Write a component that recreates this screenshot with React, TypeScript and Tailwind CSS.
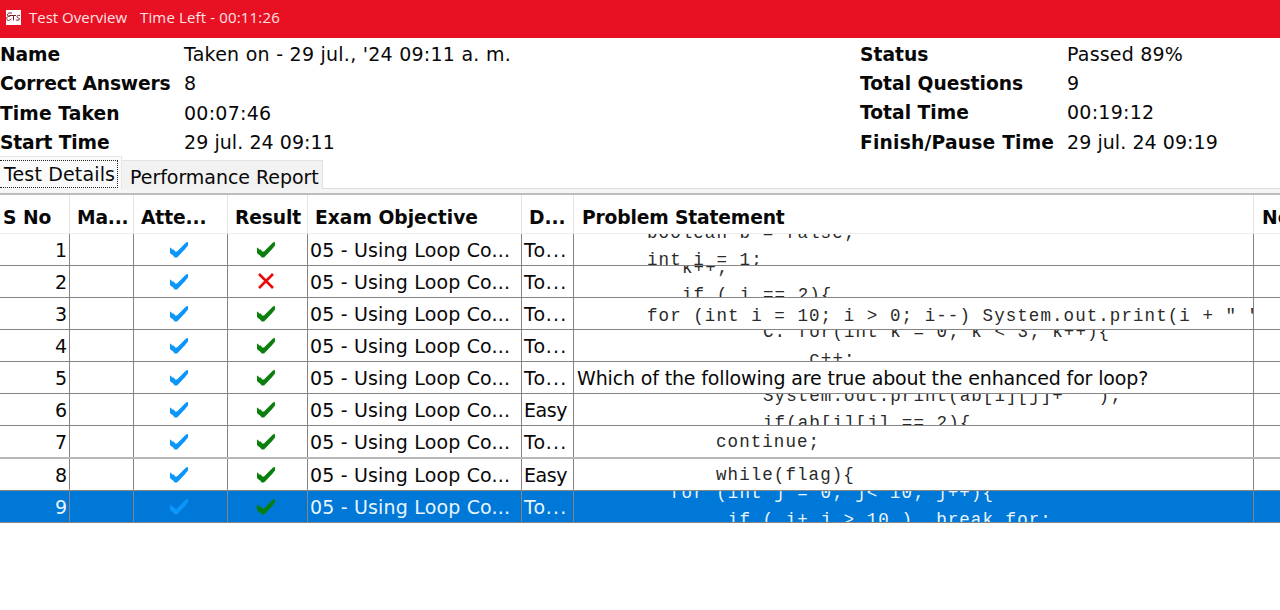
type Row = {
  no: number;
  level: string;
  lines: string[];
  indent: string;
  shift: string;
  passed: boolean;
  prose?: boolean;
};

const two = "-mt-[11px]";
const one = "mt-[5px]";

const rows: Row[] = [
  { no: 1, level: "To...", lines: ["boolean b = false;", "int i = 1;"], indent: "pl-[73px]", shift: "-mt-[14px]", passed: true },
  { no: 2, level: "To...", lines: ["k++;", "if ( i == 2){"], indent: "pl-[108px]", shift: two, passed: false },
  { no: 3, level: "To...", lines: ['for (int i = 10; i > 0; i--) System.out.print(i + " " '], indent: "pl-[73px]", shift: one, passed: true },
  { no: 4, level: "To...", lines: ["C: for(int k = 0; k < 3; k++){", "    c++;"], indent: "pl-[189px]", shift: two, passed: true },
  { no: 5, level: "To...", lines: ["Which of the following are true about the enhanced for loop?"], indent: "pl-[3px]", shift: "mt-[3px]", passed: true, prose: true },
  { no: 6, level: "Easy", lines: ['System.out.print(ab[i][j]+" ");', "if(ab[i][j] == 2){"], indent: "pl-[189px]", shift: two, passed: true },
  { no: 7, level: "To...", lines: ["continue;"], indent: "pl-[142px]", shift: "mt-[3px]", passed: true },
  { no: 8, level: "Easy", lines: ["while(flag){"], indent: "pl-[142px]", shift: "mt-[3px]", passed: true },
  { no: 9, level: "To...", lines: ["for (int j = 0; j< 10; j++){", "     if ( i+ j > 10 )  break for;"], indent: "pl-[96px]", shift: two, passed: true },
];

const leftInfo = [
  ["Name", "Taken on - 29 jul., '24 09:11 a. m.", "tracking-[-0.1px]", "tracking-[0.25px]"],
  ["Correct Answers", "8", "tracking-[-0.2px]", ""],
  ["Time Taken", "00:07:46", "tracking-[0.1px]", "tracking-[0.25px]"],
  ["Start Time", "29 jul. 24 09:11", "tracking-[-0.15px]", "tracking-[0.06px]"],
];

const rightInfo = [
  ["Status", "Passed 89%", "", "tracking-[0.2px]"],
  ["Total Questions", "9", "", ""],
  ["Total Time", "00:19:12", "", "tracking-[0.25px]"],
  ["Finish/Pause Time", "29 jul. 24 09:19", "tracking-[0.2px]", "tracking-[0.06px]"],
];

const grid = "grid grid-cols-[70px_64px_94px_80px_214px_52px_680px_26px]";

function Check({ color }: { color: string }) {
  return (
    <svg width="18" height="16" viewBox="0 0 18 16" className={color} fill="currentColor">
      <path d="M0 5.8L1 5.8L2 7.6H4L5 9.6H7L8.5 8L10 6.5L11.5 5L13 3.5L14.5 2L16 .6L18 0V3.6L16.5 5.2L15 7.2L13.5 8.7L12 10.3L10.5 11.9L9 13.4L7 15.4H4.6L3.4 13.8L1.6 12.4L0 11Z" />
    </svg>
  );
}

function Cross() {
  return (
    <svg width="16" height="16" viewBox="0 0 16 16" className="text-[#ea0a0a]" stroke="currentColor" strokeWidth="2.6">
      <path d="M1 1L15 15M15 1L1 15" />
    </svg>
  );
}

function Info({ items, labelWidth }: { items: string[][]; labelWidth: string }) {
  return (
    <div className="flex flex-col">
      {items.map(([label, value, labelSpacing, valueSpacing]) => (
        <div key={label} className="flex h-[29.5px] items-center whitespace-nowrap">
          <div className={`${labelWidth} shrink-0 text-[18.7px] font-bold ${labelSpacing}`}>{label}</div>
          <div className={valueSpacing}>{value}</div>
        </div>
      ))}
    </div>
  );
}

export default function App() {
  const head = "flex h-full items-center overflow-hidden border-r border-[#e4e4e4] pt-[7px] whitespace-nowrap";
  return (
    <div className="h-[610px] w-[1280px] overflow-hidden bg-white font-['DejaVu_Sans',sans-serif] text-[19px] leading-[27px] text-[#080808]">
      <header className="flex h-[37.5px] items-center bg-[#e81123] pl-[6px] font-['Open_Sans',sans-serif] text-[15px] text-[#ffe3e5]">
        <svg width="15" height="15" viewBox="0 0 15 15" className="-mt-[3px] mr-[8px] shrink-0">
          <rect width="15" height="15" fill="#fff" />
          <g fill="none" stroke="#7c1d24" strokeWidth="1">
            <path d="M6 3.2C3 2 .8 4 1.6 5.5S5 6 5 5.2C2 6 .2 7.5 .8 9.3S4 10.6 5.6 8.6" />
            <path d="M5 5.5H10M7.5 5.5V10.5M14 5.5C12 5 10.5 5.8 11 7S13.8 8 13.5 9.3S11 10.4 9.8 9.8" />
          </g>
        </svg>
        <span className="-mt-[2px] w-[111px] shrink-0 whitespace-nowrap">Test Overview</span>
        <span className="-mt-[2px] whitespace-nowrap tracking-[0.15px]">Time Left - 00:11:26</span>
      </header>

      <section className="flex h-[119.5px] pt-[2px]">
        <div className="w-[860px]">
          <Info items={leftInfo} labelWidth="w-[184px]" />
        </div>
        <Info items={rightInfo} labelWidth="w-[207px]" />
      </section>

      <nav className="flex h-[32px] items-end">
        <div className="h-[33px] w-[122px] border-t border-r border-[#e6e6e6] bg-[#fafafa] pt-[3px] pr-[3px]">
          <div className="flex h-[28px] items-center border border-l-0 border-dotted border-[#222] pl-[4px] tracking-[0.15px] whitespace-nowrap">Test Details</div>
        </div>
        <div className="flex h-[29px] w-[201px] items-center self-end border-t border-r border-[#e2e2e2] bg-[#f2f2f2] pt-[4px] pl-[8px] tracking-[-0.04px] whitespace-nowrap">Performance Report</div>
        <div className="h-px flex-1 bg-[#dcdcdc]" />
      </nav>
      <div className="h-[4px] bg-[#f5f5f7]" />
      <div className="h-[2px] bg-[#bdbdc0]" />

      <div className={`${grid} h-[39px] border-b border-[#ececec] text-[18.7px] font-bold`}>
        <div className={`${head} pl-[3px]`}>S No</div>
        <div className={`${head} pl-[7px] tracking-[-0.2px]`}>Ma...</div>
        <div className={`${head} pl-[7px] tracking-[-0.1px]`}>Atte...</div>
        <div className={`${head} pl-[7px] tracking-[-0.15px]`}>Result</div>
        <div className={`${head} pl-[7px]`}>Exam Objective</div>
        <div className={`${head} pl-[7px] tracking-[-0.1px]`}>D...</div>
        <div className={`${head} pl-[8px] tracking-[-0.15px]`}>Problem Statement</div>
        <div className="flex h-full items-center overflow-hidden pt-[7px] pl-[8px] whitespace-nowrap">No</div>
      </div>

      {rows.map((r) => {
        const selected = r.no === 9;
        const cell = "flex overflow-hidden border-r border-[#858585] whitespace-nowrap";
        const rule = r.no === 7 ? "border-b-2 border-[#b8b8b8] h-[33px]" : "border-b border-[#858585] h-[32px]";
        return (
          <div key={r.no} className={`${grid} ${rule} ${selected ? "bg-[#0078d7] text-[#e8f4ff]" : ""}`}>
            <div className={`${cell} items-center justify-end pt-[2px] pr-[2px]`}>{r.no}</div>
            <div className={cell} />
            <div className={`${cell} items-center justify-center`}>
              <Check color="-ml-[3px] text-[#0a96fb]" />
            </div>
            <div className={`${cell} items-center justify-center`}>
              {r.passed ? <Check color="-ml-[3px] text-[#087f0c]" /> : <span className="-mt-[1px] -ml-[3px]"><Cross /></span>}
            </div>
            <div className={`${cell} items-center pt-[2px] pl-[2px] tracking-[0.17px]`}>05 - Using Loop Co...</div>
            <div className={`${cell} items-center pt-[2px] pl-[2px] ${r.level === "Easy" ? "tracking-[-0.4px]" : "tracking-[1.1px]"}`}>{r.level}</div>
            <div className={`${cell} border-[#777]`}>
              <div className={`${r.shift} ${r.indent} ${r.prose ? "tracking-[-0.15px]" : `font-['Liberation_Mono',monospace] text-[17.5px] tracking-[1.07px] whitespace-pre ${selected ? "" : "text-[#2a2a2a]"}`}`}>
                {r.lines.map((l) => (
                  <div key={l} className="h-[27px]">{l}</div>
                ))}
              </div>
            </div>
            <div />
          </div>
        );
      })}
    </div>
  );
}
